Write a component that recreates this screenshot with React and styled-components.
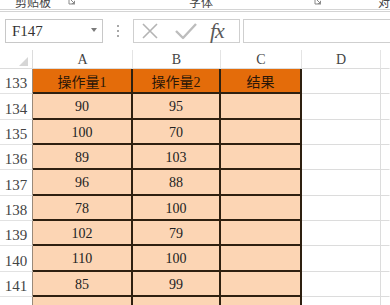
import styled, { createGlobalStyle } from 'styled-components';

const GlobalStyle = createGlobalStyle`
  html, body {
    margin: 0;
    padding: 0;
    background: #fff;
    overflow: hidden;
  }
  body {
    font-family: "Liberation Serif", "Noto Sans CJK SC", serif;
  }
`;

const Page = styled.div`
  width: 390px;
  height: 305px;
  overflow: hidden;
  background: #fff;
`;

// ribbon strip, only its bottom edge is in view
const Ribbon = styled.div`
  height: 9px;
  overflow: hidden;
  border-bottom: 3px double #d4d4d4;
`;

const RibbonTrack = styled.div`
  display: grid;
  grid-template-columns: 80px 246px 1fr;
  height: 12px;
  margin-top: -4px;
`;

const RibbonGroup = styled.div`
  display: grid;
  grid-template-columns: ${(p) => (p.$centered ? '1fr auto 1fr' : 'auto 1fr auto')};
  align-items: end;
  padding: ${(p) => p.$pad || '0'};
  white-space: nowrap;
  overflow: hidden;
`;

const RibbonLabel = styled.span`
  font-family: "Noto Sans CJK SC", sans-serif;
  font-size: 12px;
  line-height: 12px;
  color: #444;
  grid-column: ${(p) => p.$col || 'auto'};
`;

const Launcher = styled.svg`
  width: 8px;
  height: 8px;
  justify-self: end;
  grid-column: 3;
  margin-bottom: 3px;
`;

const LauncherIcon = () => (
  <Launcher viewBox="0 0 8 8">
    <path d="M1 1 V7 H7" fill="none" stroke="#8a8a8a" strokeWidth="1" />
    <path d="M3 3 L6.5 6.5 M6.5 3.8 V6.5 H3.8" fill="none" stroke="#8a8a8a" strokeWidth="1" />
  </Launcher>
);

const FormulaBar = styled.div`
  display: flex;
  align-items: center;
  height: 24px;
  margin: 7px 0 7px 5px;
`;

const NameBox = styled.div`
  box-sizing: border-box;
  width: 98px;
  height: 24px;
  border: 1px solid #c8c8c8;
  display: flex;
  align-items: center;
  justify-content: space-between;
  padding: 0 5px 0 6px;
  font-family: "Liberation Serif", serif;
  font-size: 15px;
  color: #333;
`;

const DropArrow = styled.span`
  width: 0;
  height: 0;
  border-left: 3px solid transparent;
  border-right: 3px solid transparent;
  border-top: 4px solid #7a7a7a;
  margin-bottom: 3px;
`;

const Grip = styled.div`
  display: flex;
  flex-direction: column;
  gap: 3px;
  margin: 0 14px 0 14px;
  span {
    width: 2px;
    height: 2px;
    background: #a8a8a8;
  }
`;

const FxButtons = styled.div`
  box-sizing: border-box;
  width: 107px;
  height: 24px;
  border: 1px solid #cfcfcf;
  display: flex;
  align-items: center;
  padding: 0 0 0 6px;
`;

const IconBox = styled.svg`
  width: ${(p) => p.$w || 20}px;
  height: 20px;
  margin-right: ${(p) => p.$mr || 0}px;
`;

const Fx = styled.span`
  font-family: "Liberation Serif", serif;
  font-style: italic;
  font-size: 22px;
  line-height: 22px;
  color: #5a5a5a;
  margin-left: 4px;
  letter-spacing: -1px;
`;

const FormulaInput = styled.div`
  flex: 1;
  height: 24px;
  box-sizing: border-box;
  margin-left: 3px;
  border: 1px solid #cfcfcf;
  border-right: none;
`;

const grid = '#dcdcdc';
const ink = '#2e2010';

const Sheet = styled.div`
  display: grid;
  grid-template-columns: 33px 100px 88px 81px 79px 1fr;
  grid-template-rows: 19px repeat(10, 25.33px);
`;

const Corner = styled.div`
  box-sizing: border-box;
  border-right: 1px solid ${grid};
  border-bottom: 1px solid ${grid};
  display: flex;
  align-items: flex-end;
  justify-content: flex-end;
  padding: 0 4px 2px 0;
`;

const CornerMark = styled.span`
  width: 0;
  height: 0;
  border-left: 9px solid transparent;
  border-bottom: 9px solid #d6d6d6;
`;

const ColHead = styled.div`
  box-sizing: border-box;
  border-right: 1px solid ${(p) => (p.$last ? 'transparent' : '#e4e4e4')};
  border-bottom: 1px solid ${grid};
  display: flex;
  align-items: flex-end;
  justify-content: center;
  font-family: "Liberation Serif", serif;
  font-size: 14px;
  line-height: 17px;
  color: #444;
`;

const RowHead = styled.div`
  box-sizing: border-box;
  border-right: 1px solid ${(p) => (p.$table ? '#9a8a7a' : grid)};
  border-bottom: 1px solid #e2e2e2;
  display: flex;
  align-items: flex-end;
  justify-content: center;
  padding-bottom: 1px;
  font-family: "Liberation Serif", serif;
  font-size: 15px;
  line-height: 17px;
  color: #444;
`;

const fills = { head: '#e46c0a', body: '#fcd5b4', plain: '#fff' };

const Cell = styled.div`
  box-sizing: border-box;
  background: ${(p) => fills[p.$kind]};
  border-right: ${(p) => (p.$kind === 'plain' ? `1px solid ${p.$edge ? 'transparent' : grid}` : `2px solid ${ink}`)};
  border-bottom: ${(p) => (p.$kind === 'plain' ? `1px solid ${grid}` : `2px solid ${ink}`)};
  display: flex;
  align-items: center;
  justify-content: center;
  padding-top: ${(p) => (p.$kind === 'head' ? '0' : '3px')};
  font-family: "Liberation Serif", "Noto Sans CJK SC", serif;
  font-size: 14px;
  color: ${(p) => (p.$kind === 'head' ? '#2a1608' : '#222')};
  overflow: hidden;
  white-space: nowrap;
`;

const rows = [
  { n: 133, head: true, a: '操作量1', b: '操作量2', c: '结果' },
  { n: 134, a: '90', b: '95' },
  { n: 135, a: '100', b: '70' },
  { n: 136, a: '89', b: '103' },
  { n: 137, a: '96', b: '88' },
  { n: 138, a: '78', b: '100' },
  { n: 139, a: '102', b: '79' },
  { n: 140, a: '110', b: '100' },
  { n: 141, a: '85', b: '99' },
  { n: 142, a: '', b: '' },
];

export default function App() {
  return (
    <Page>
      <GlobalStyle />
      <Ribbon>
        <RibbonTrack>
          <RibbonGroup $pad="0 4px 0 15px">
            <RibbonLabel>剪贴板</RibbonLabel>
            <LauncherIcon />
          </RibbonGroup>
          <RibbonGroup $centered $pad="0 4px 0 0">
            <RibbonLabel $col="2">字体</RibbonLabel>
            <LauncherIcon />
          </RibbonGroup>
          <RibbonGroup $pad="0 0 0 52px">
            <RibbonLabel>对齐方式</RibbonLabel>
          </RibbonGroup>
        </RibbonTrack>
      </Ribbon>

      <FormulaBar>
        <NameBox>
          F147
          <DropArrow />
        </NameBox>
        <Grip>
          <span />
          <span />
          <span />
        </Grip>
        <FxButtons>
          <IconBox viewBox="0 0 20 20" $mr={14}>
            <path d="M3 3 L17 17 M17 3 L3 17" stroke="#b4b4b4" strokeWidth="1.6" fill="none" />
          </IconBox>
          <IconBox viewBox="0 0 24 20" $w={24} $mr={8}>
            <path d="M2 10 L9 17 L22 3" stroke="#bdbdbd" strokeWidth="2.4" fill="none" strokeLinejoin="round" />
          </IconBox>
          <Fx>fx</Fx>
        </FxButtons>
        <FormulaInput />
      </FormulaBar>

      <Sheet>
        <Corner>
          <CornerMark />
        </Corner>
        <ColHead>A</ColHead>
        <ColHead>B</ColHead>
        <ColHead>C</ColHead>
        <ColHead>D</ColHead>
        <ColHead $last />
        {rows.map((r) => {
          const kind = r.head ? 'head' : 'body';
          return [
            <RowHead key={`h${r.n}`} $table>{r.n}</RowHead>,
            <Cell key={`a${r.n}`} $kind={kind}>{r.a}</Cell>,
            <Cell key={`b${r.n}`} $kind={kind}>{r.b}</Cell>,
            <Cell key={`c${r.n}`} $kind={kind}>{r.c || ''}</Cell>,
            <Cell key={`d${r.n}`} $kind="plain" />,
            <Cell key={`e${r.n}`} $kind="plain" $edge />,
          ];
        })}
      </Sheet>
    </Page>
  );
}
